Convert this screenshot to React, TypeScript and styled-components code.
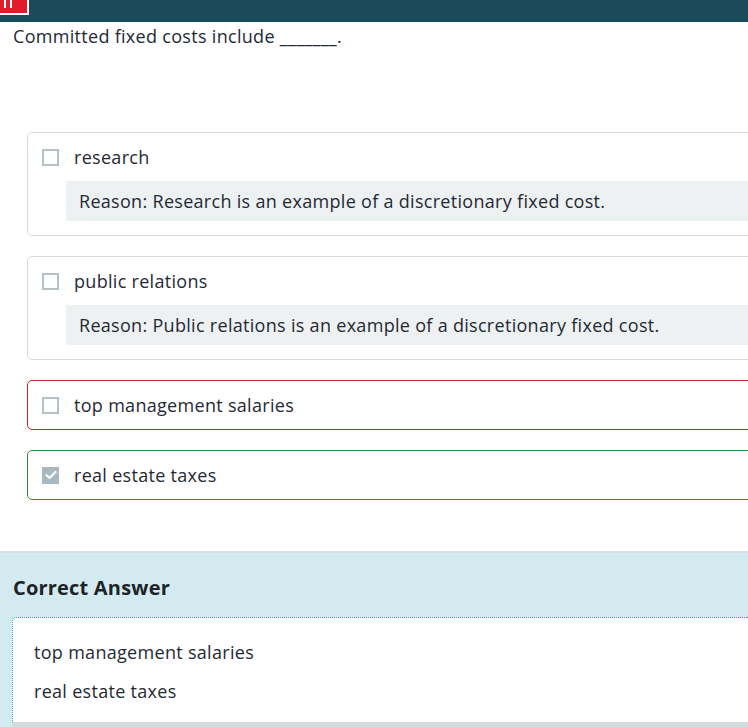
import styled, { createGlobalStyle, css } from "styled-components";

const GlobalStyle = createGlobalStyle`
    html, body {
        margin: 0;
        padding: 0;
        background: #ffffff;
        overflow-x: hidden;
    }
    body {
        font-family: "Open Sans", "Noto Sans", "Liberation Sans", sans-serif;
        color: #1f2a36;
        letter-spacing: 0.3px;
    }
`;

type Status = "neutral" | "wrong" | "right";

const borderFor: Record<Status, string> = {
    "neutral": "#d3dbde",
    "wrong": "#c1272d",
    "right": "#2e8b3a",
};

const Page = styled.div`
    display: flex;
    flex-direction: column;
    min-height: 727px;
`;

const TopBar = styled.div`
    height: 22px;
    background: #1b4a5a;
    display: flex;
    align-items: flex-start;
`;

const PauseBadge = styled.div`
    width: 23px;
    height: 13px;
    background: #e21b2b;
    border-right: 2px solid #ffffff;
    border-bottom: 2px solid #ffffff;
    display: flex;
    gap: 4px;
    padding-left: 4px;
`;

const PauseBar = styled.span`
    display: block;
    width: 2px;
    height: 8px;
    background: #ffffff;
`;

const Question = styled.p`
    margin: 0;
    padding: 4px 13px 1px;
    font-size: 18px;
    line-height: 20px;
`;

const Options = styled.div`
    display: flex;
    flex-direction: column;
    gap: 20px;
    margin: 85px -20px 0 27px;
`;

const Card = styled.div<{ $status: Status }>`
    border: 1px solid ${({ $status }) => borderFor[$status]};
    border-radius: 5px;
    padding: 14px 0 14px 14px;
    display: flex;
    flex-direction: column;
    gap: 14px;
`;

const Row = styled.label`
    display: flex;
    align-items: center;
    gap: 15px;
    font-size: 18px;
    line-height: 20px;
`;

const Box = styled.span<{ $checked?: boolean }>`
    width: 17px;
    height: 17px;
    box-sizing: border-box;
    flex: none;
    display: flex;
    align-items: center;
    justify-content: center;
    ${({ $checked }) =>
        $checked
            ? css`
                  background: #aab9bf;
              `
            : css`
                  border: 2px solid #b3c0c5;
              `}
`;

const Reason = styled.div`
    margin-left: 24px;
    background: #eef1f2;
    padding: 10px 13px;
    font-size: 18px;
    line-height: 20px;
`;

const AnswerSection = styled.section`
    margin-top: 51px;
    border-top: 2px solid #d6dfe2;
    background: #d3ebf0;
    padding: 0 0 0 12px;
    flex: 1;
    display: flex;
    flex-direction: column;
`;

const AnswerTitle = styled.h2`
    margin: 0;
    padding: 24px 1px 0;
    font-size: 20px;
    line-height: 22px;
    font-weight: 700;
    letter-spacing: 0.2px;
    color: #1d2329;
`;

const AnswerBox = styled.div`
    margin-top: 18px;
    background: #ffffff;
    border-top: 1px dotted #18b1cd;
    border-left: 1px dotted #18b1cd;
    border-top-left-radius: 4px;
    padding: 24px 0 0 21px;
    display: flex;
    flex-direction: column;
    gap: 19px;
    flex: 1;
    border-bottom: 5px solid #d3dcde;
`;

const AnswerLine = styled.div`
    font-size: 18px;
    line-height: 20px;
`;

const CheckMark = () => (
    <svg width="12" height="10" viewBox="0 0 12 10" fill="none">
        <path
            d="M1.5 5.2 L4.5 8 L10.5 2"
            stroke="#ffffff"
            strokeWidth="2.2"
            strokeLinecap="round"
            strokeLinejoin="round"
        />
    </svg>
);

const choices: { label: string; status: Status; checked?: boolean; reason?: string }[] = [
    {
        "label": "research",
        "status": "neutral",
        "reason": "Reason: Research is an example of a discretionary fixed cost.",
    },
    {
        "label": "public relations",
        "status": "neutral",
        "reason": "Reason: Public relations is an example of a discretionary fixed cost.",
    },
    { "label": "top management salaries", "status": "wrong" },
    { "label": "real estate taxes", "status": "right", "checked": true },
];

export default function App() {
    return (
        <Page>
            <GlobalStyle />
            <TopBar>
                <PauseBadge>
                    <PauseBar />
                    <PauseBar />
                </PauseBadge>
            </TopBar>
            <Question>Committed fixed costs include _______.</Question>
            <Options>
                {choices.map((c) => (
                    <Card key={c.label} $status={c.status}>
                        <Row>
                            <Box $checked={c.checked}>{c.checked ? <CheckMark /> : null}</Box>
                            {c.label}
                        </Row>
                        {c.reason ? <Reason>{c.reason}</Reason> : null}
                    </Card>
                ))}
            </Options>
            <AnswerSection>
                <AnswerTitle>Correct Answer</AnswerTitle>
                <AnswerBox>
                    <AnswerLine>top management salaries</AnswerLine>
                    <AnswerLine>real estate taxes</AnswerLine>
                </AnswerBox>
            </AnswerSection>
        </Page>
    );
}
